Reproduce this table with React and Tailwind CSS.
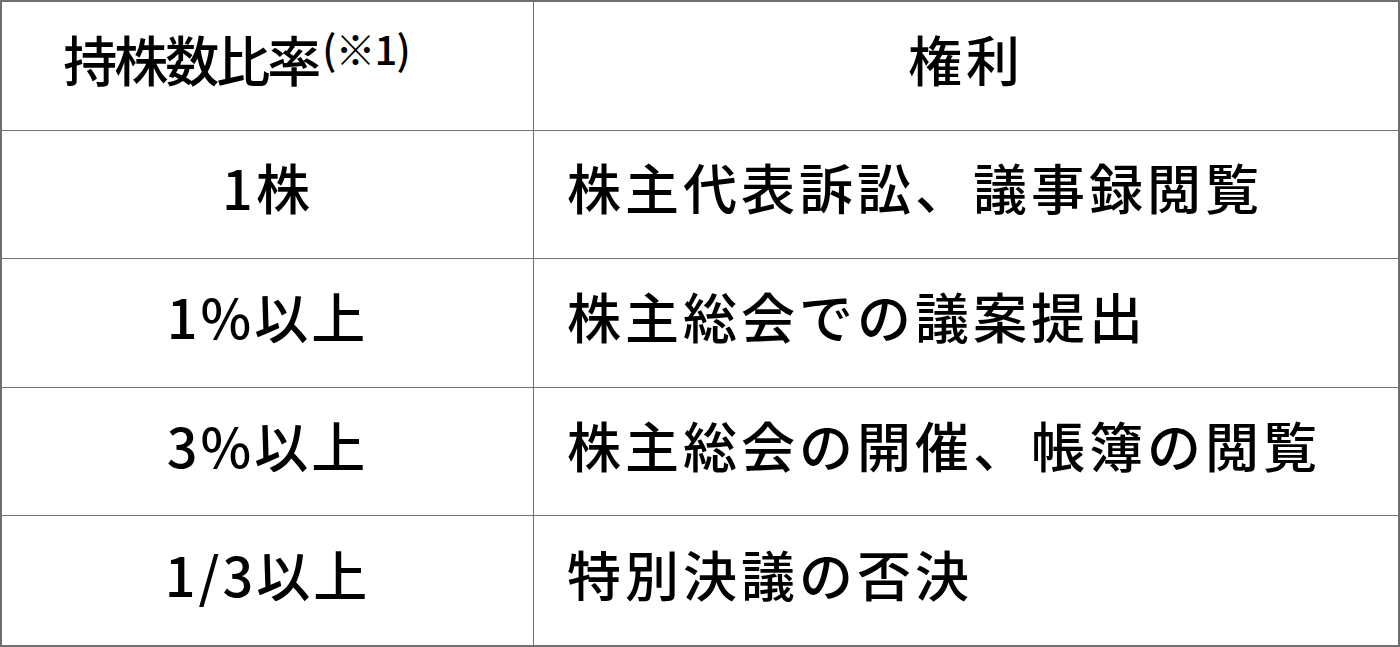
const rows = [
  { left: "1株", right: "株主代表訴訟、議事録閲覧" },
  { left: "1%以上", right: "株主総会での議案提出" },
  { left: "3%以上", right: "株主総会の開催、帳簿の閲覧" },
  { left: "1/3以上", right: "特別決議の否決" },
];

export default function App() {
  return (
    <div
      className="w-[1400px] h-[647px] bg-white text-black"
      style={{ fontFamily: '"Noto Sans CJK JP", "Noto Sans", sans-serif' }}
    >
      <div className="grid h-full grid-cols-[532px_1fr] grid-rows-5 border-2 border-[#6f6f6f]">
        {/* header */}
        <div className="flex items-center justify-center border-r border-b border-[#707070] pb-[14px] pr-[62px]">
          <span className="text-[54px] font-medium tracking-[-3px] leading-none">持株数比率</span>
          <span className="text-[40px] font-medium leading-none self-start mt-[26px] ml-[4px] tracking-[-1px]">(※1)</span>
        </div>
        <div className="flex items-center justify-center border-b border-[#707070] pb-[14px]">
          <span className="text-[54px] font-medium tracking-[4px] leading-none">権利</span>
        </div>

        {rows.map((r, i) => {
          const last = i === rows.length - 1;
          return [
            <div
              key={"l" + i}
              className={
                "flex items-center justify-center border-r border-[#707070] pb-[14px] " +
                (last ? "" : "border-b")
              }
            >
              <span className="text-[54px] font-medium tracking-[3px] leading-none">{r.left}</span>
            </div>,
            <div
              key={"r" + i}
              className={
                "flex items-center pl-[33px] border-[#707070] pb-[14px] " + (last ? "" : "border-b")
              }
            >
              <span className="text-[54px] font-medium tracking-[4px] leading-none">{r.right}</span>
            </div>,
          ];
        })}
      </div>
    </div>
  );
}
